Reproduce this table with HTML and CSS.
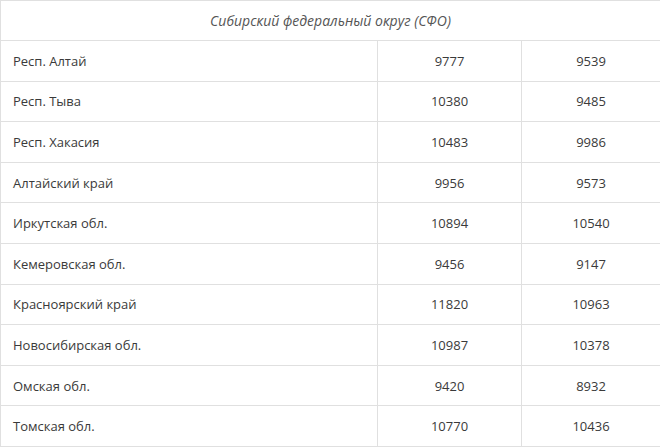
FILE: index.html
```html
<!DOCTYPE html>
<html lang="ru">
<head>
<meta charset="utf-8">
<link rel="stylesheet" href="styles.css">
</head>
<body>
<table class="data">
  <colgroup>
    <col class="col-name">
    <col class="col-a">
    <col class="col-b">
  </colgroup>
  <thead>
    <tr class="head-row"><th class="caption" colspan="3">Сибирский федеральный округ (СФО)</th></tr>
  </thead>
  <tbody>
    <tr><td class="name">Респ. Алтай</td><td class="num">9777</td><td class="num">9539</td></tr>
    <tr><td class="name">Респ. Тыва</td><td class="num">10380</td><td class="num">9485</td></tr>
    <tr><td class="name">Респ. Хакасия</td><td class="num">10483</td><td class="num">9986</td></tr>
    <tr><td class="name">Алтайский край</td><td class="num">9956</td><td class="num">9573</td></tr>
    <tr><td class="name">Иркутская обл.</td><td class="num">10894</td><td class="num">10540</td></tr>
    <tr><td class="name">Кемеровская обл.</td><td class="num">9456</td><td class="num">9147</td></tr>
    <tr><td class="name">Красноярский край</td><td class="num">11820</td><td class="num">10963</td></tr>
    <tr><td class="name">Новосибирская обл.</td><td class="num">10987</td><td class="num">10378</td></tr>
    <tr><td class="name">Омская обл.</td><td class="num">9420</td><td class="num">8932</td></tr>
    <tr><td class="name">Томская обл.</td><td class="num">10770</td><td class="num">10436</td></tr>
  </tbody>
</table>
</body>
</html>
```
FILE: styles.css
```css
html, body {
  margin: 0;
  padding: 0;
  background: #ffffff;
}
.data {
  width: 660px;
  border-collapse: collapse;
  table-layout: fixed;
  font-family: "Open Sans", "Liberation Sans", sans-serif;
  font-size: 13px;
  color: #3a3a3a;
}
.col-name { width: 377px; }
.col-a { width: 144px; }
.col-b { width: 139px; }
.data tr {
  height: 40.6px;
}
.data .head-row {
  height: 40px;
}
.data th,
.data td {
  border: 1px solid #e0e0e0;
  padding: 0;
  line-height: 18px;
}
.caption {
  font-weight: normal;
  font-style: italic;
  font-size: 14px;
  color: #555555;
  text-align: center;
  border-top: none;
}
.name {
  padding-left: 12px !important;
  text-align: left;
}
.num {
  text-align: center;
}
```
